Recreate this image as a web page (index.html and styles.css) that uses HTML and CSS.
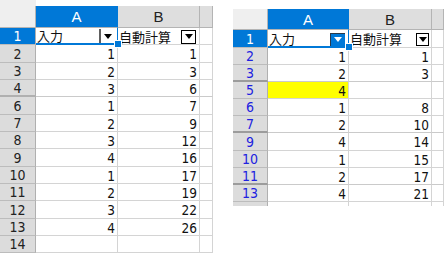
FILE: index.html
```html
<!DOCTYPE html>
<html>
<head>
<meta charset="utf-8">
<link rel="stylesheet" href="styles.css">
</head>
<body>
<div class="page">
  <div class="sheet left">
    <div class="row strip"><div class="corner"></div><div></div><div></div><div></div></div>
    <div class="row head"><div class="corner"></div><div class="ch sel">A</div><div class="ch">B</div><div class="ch"></div></div>
    <div class="row r1">
      <div class="rh sel">1</div>
      <div class="c txt cur"><span class="lbl">入力</span><span class="dd dd-bar"><svg width="8" height="5" viewBox="0 0 8 5"><path d="M0 0h8L4 5z"/></svg></span></div>
      <div class="c txt"><span class="lbl">自動計算</span><span class="dd dd-box"><svg width="8" height="5" viewBox="0 0 8 5"><path d="M0 0h8L4 5z"/></svg></span></div>
      <div class="c"></div>
    </div>
    <div class="row tall"><div class="rh">2</div><div class="c n">1</div><div class="c n">1</div><div class="c"></div></div>
    <div class="row"><div class="rh">3</div><div class="c n">2</div><div class="c n">3</div><div class="c"></div></div>
    <div class="row hid"><div class="rh">4</div><div class="c n">3</div><div class="c n">6</div><div class="c"></div></div>
    <div class="row tall"><div class="rh">6</div><div class="c n">1</div><div class="c n">7</div><div class="c"></div></div>
    <div class="row"><div class="rh">7</div><div class="c n">2</div><div class="c n">9</div><div class="c"></div></div>
    <div class="row"><div class="rh">8</div><div class="c n">3</div><div class="c n">12</div><div class="c"></div></div>
    <div class="row tall"><div class="rh">9</div><div class="c n">4</div><div class="c n">16</div><div class="c"></div></div>
    <div class="row"><div class="rh">10</div><div class="c n">1</div><div class="c n">17</div><div class="c"></div></div>
    <div class="row"><div class="rh">11</div><div class="c n">2</div><div class="c n">19</div><div class="c"></div></div>
    <div class="row tall"><div class="rh">12</div><div class="c n">3</div><div class="c n">22</div><div class="c"></div></div>
    <div class="row"><div class="rh">13</div><div class="c n">4</div><div class="c n">26</div><div class="c"></div></div>
    <div class="row"><div class="rh">14</div><div class="c n"></div><div class="c n"></div><div class="c"></div></div>
  </div>

  <div class="sheet right">
    <div class="row head"><div class="corner"></div><div class="ch sel">A</div><div class="ch">B</div><div class="ch"></div></div>
    <div class="row r1">
      <div class="rh sel">1</div>
      <div class="c txt cur"><span class="lbl">入力</span><span class="dd dd-blue"><svg width="8" height="5" viewBox="0 0 8 5"><path d="M0 0h8L4 5z"/></svg></span></div>
      <div class="c txt"><span class="lbl">自動計算</span><span class="dd dd-sm"><svg width="8" height="5" viewBox="0 0 8 5"><path d="M0 0h8L4 5z"/></svg></span></div>
      <div class="c"></div>
    </div>
    <div class="row"><div class="rh">2</div><div class="c n">1</div><div class="c n">1</div><div class="c"></div></div>
    <div class="row hid"><div class="rh">3</div><div class="c n">2</div><div class="c n">3</div><div class="c"></div></div>
    <div class="row"><div class="rh">5</div><div class="c n hl">4</div><div class="c n"></div><div class="c"></div></div>
    <div class="row"><div class="rh">6</div><div class="c n">1</div><div class="c n">8</div><div class="c"></div></div>
    <div class="row hid"><div class="rh">7</div><div class="c n">2</div><div class="c n">10</div><div class="c"></div></div>
    <div class="row tall"><div class="rh">9</div><div class="c n">4</div><div class="c n">14</div><div class="c"></div></div>
    <div class="row"><div class="rh">10</div><div class="c n">1</div><div class="c n">15</div><div class="c"></div></div>
    <div class="row hid"><div class="rh">11</div><div class="c n">2</div><div class="c n">17</div><div class="c"></div></div>
    <div class="row"><div class="rh">13</div><div class="c n">4</div><div class="c n">21</div><div class="c"></div></div>
    <div class="row tail"><div class="rh"></div><div class="c"></div><div class="c"></div><div class="c"></div></div>
  </div>
</div>
</body>
</html>
```
FILE: styles.css
```css
* { box-sizing: border-box; }
body {
  margin: 0;
  background: #fff;
  font-family: "DejaVu Sans", "Liberation Sans", sans-serif;
  font-stretch: condensed;
  color: #111;
}
.page { display: flex; align-items: flex-start; gap: 20px; }
.sheet { display: flex; flex-direction: column; }
.left { width: 213px; }
.right { width: 211px; margin-top: 9px; }

.row { display: grid; grid-template-rows: 100%; height: 17px; flex: none; }
.row.tall { height: 18px; }
.left .row { grid-template-columns: 36px 82px 82px 13px; }
.right .row { grid-template-columns: 35px 81px 83px 12px; }
.left .strip { height: 6px; }
.left .head { height: 22px; }
.right .head { height: 21px; }
.right .r1 { height: 18px; }
.right .tail { height: 4px; }

.row > div {
  border-right: 1px solid #d4d4d4;
  border-bottom: 1px solid #d4d4d4;
  display: flex;
  align-items: center;
  min-width: 0;
  min-height: 0;
  line-height: 14px;
}
.strip > div { border: none; }
.strip > .corner { background: #efefef; }
.head > .corner { background: #efefef; border-right: 1px solid #b4b4b4; border-bottom: 1px solid #b4b4b4; }

.ch {
  background: #dedede;
  border-right: 1px solid #b4b4b4 !important;
  border-bottom: 1px solid #b4b4b4 !important;
  justify-content: center;
  font-family: "Liberation Sans", sans-serif;
  font-size: 15px;
  color: #222;
  padding-top: 1px;
}
.rh {
  background: #dcdcdc;
  border-right: 1px solid #b0b0b0 !important;
  border-bottom: 1px solid #bcbcbc !important;
  justify-content: center;
  font-size: 14px;
  color: #222;
  overflow: hidden;
}
.right .rh { color: #2121e0; }
.ch.sel, .rh.sel { background: #0078d7; color: #fff; }
.ch.sel { border-right-color: #0078d7 !important; }

.hid > .rh { border-bottom: 2px solid #9c9c9c !important; }
.hid > .c { border-bottom: 1px solid #cacaca; }
.left .hid > .rh { border-bottom: 2px solid #b0b0b0 !important; }
.tail > div { border-bottom: none !important; }

.c { background: #fff; }
.n { justify-content: flex-end; padding-right: 2px; font-size: 13.5px; padding-top: 1px; overflow: hidden; }
.n.hl { background: #ffff00; }

.txt {
  font-family: "Noto Sans CJK JP", sans-serif;
  font-size: 13px;
  padding-left: 1px;
  padding-right: 2px;
  color: #111;
}
.lbl { flex: 1; white-space: nowrap; line-height: 15px; }
.cur { position: relative; border-bottom: 2px solid #0078d7 !important; border-right: 1px solid #0078d7 !important; }
.cur::after {
  content: "";
  position: absolute;
  right: -4px;
  bottom: -4px;
  width: 6px;
  height: 6px;
  background: #0078d7;
  outline: 1px solid #fff;
}

.dd { display: flex; align-items: center; justify-content: center; flex: none; }
.dd svg { display: block; fill: #000; }
.dd-bar { width: 15px; height: 14px; border-left: 2px solid #606060; margin-right: 1px; margin-top: 1px; }
.dd-box { width: 15px; height: 14px; border: 1px solid #000; background: #fff; margin-right: 1px; margin-top: 1px; }
.dd-blue { width: 15px; height: 13px; border: 1px solid #2a3a4a; border-right: none; border-bottom: none; background: #0078d7; margin-right: 1px; margin-top: 2px; }
.dd-blue svg { fill: #fff; }
.dd-sm { width: 13px; height: 13px; border: 1px solid #000; background: #fff; margin-right: 0; margin-top: 2px; }
```
